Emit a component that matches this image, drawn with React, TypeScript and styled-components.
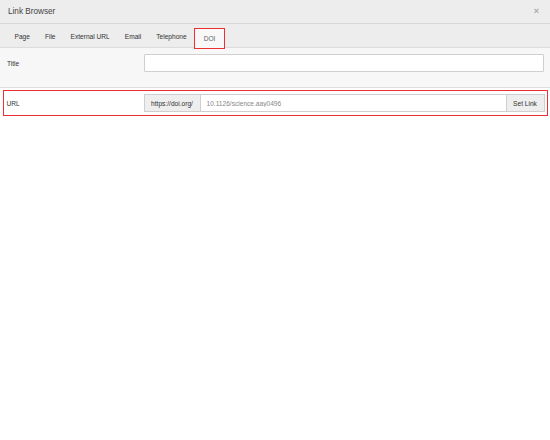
import React from "react";
import styled, { createGlobalStyle } from "styled-components";

const GlobalStyle = createGlobalStyle`
  html, body {
    margin: 0;
    padding: 0;
    background: #ffffff;
    font-family: "Liberation Sans", Arial, sans-serif;
    color: #333;
  }
  * {
    box-sizing: border-box;
  }
`;

const tabs = ["Page", "File", "External URL", "Email", "Telephone", "DOI"];

const App = () => {
  return (
    <>
      <GlobalStyle />
      <Window>
        <Header>
          <HeaderTitle>Link Browser</HeaderTitle>
          <Close>×</Close>
        </Header>
        <TabBar>
          {tabs.map((t) => (
            <Tab key={t} $active={t === "DOI"}>
              {t}
            </Tab>
          ))}
        </TabBar>
        <TitleRow>
          <Label>Title</Label>
          <TextInput type="text" />
        </TitleRow>
        <UrlRow>
          <Label>URL</Label>
          <InputGroup>
            <Addon>https://doi.org/</Addon>
            <GroupInput type="text" placeholder="10.1126/science.aay0496" />
            <SetButton>Set Link</SetButton>
          </InputGroup>
        </UrlRow>
      </Window>
    </>
  );
};

export default App;

const Window = styled.div`
  width: 550px;
  height: 440px;
  background: #fff;
  display: flex;
  flex-direction: column;
`;

const Header = styled.div`
  height: 24px;
  background: #ededed;
  border-bottom: 1px solid #d6d6d6;
  display: flex;
  align-items: center;
  justify-content: space-between;
  padding: 0 11px 0 8px;
`;

const HeaderTitle = styled.span`
  font-size: 8.2px;
  color: #444;
`;

const Close = styled.span`
  font-size: 9px;
  font-weight: 700;
  color: #aaa;
  line-height: 1;
`;

const TabBar = styled.div`
  height: 24px;
  background: #ededed;
  border-bottom: 1px solid #dcdcdc;
  display: flex;
  align-items: flex-end;
  padding-left: 7px;
`;

const Tab = styled.div<{ $active?: boolean }>`
  height: 21px;
  display: flex;
  align-items: center;
  padding: 0 ${(p) => (p.$active ? "8.5px" : "7.5px")};
  font-size: 6.6px;
  color: ${(p) => (p.$active ? "#666" : "#333")};
  background: ${(p) => (p.$active ? "#f8f8f8" : "transparent")};
  border: ${(p) => (p.$active ? "1.5px solid #ec2f2f" : "none")};
  margin-bottom: ${(p) => (p.$active ? "-2px" : "0")};
  position: relative;
`;

const TitleRow = styled.div`
  display: grid;
  grid-template-columns: 137px 1fr;
  align-items: center;
  padding: 6px 6px 15px 7px;
  background: #f7f7f7;
  border-bottom: 1px solid #dedede;
`;

const Label = styled.span`
  font-size: 6.6px;
  color: #333;
`;

const TextInput = styled.input`
  height: 18px;
  width: 100%;
  border: 1px solid #cfcfcf;
  background: #fff;
  border-radius: 1px;
  padding: 0 6px;
  font-size: 6.6px;
  outline: none;
`;

const UrlRow = styled.div`
  margin: 2px 2px 0 3px;
  display: grid;
  grid-template-columns: 137px 1fr;
  align-items: center;
  border: 1.5px solid #ec2f2f;
  padding: 3px 2.5px;
  background: #fff;
`;

const InputGroup = styled.div`
  display: flex;
  height: 18px;
`;

const Addon = styled.span`
  width: 56px;
  display: flex;
  align-items: center;
  justify-content: center;
  background: #eeeeee;
  border: 1px solid #cfcfcf;
  border-right: none;
  font-size: 6.6px;
  color: #333;
`;

const GroupInput = styled.input`
  flex: 1;
  min-width: 0;
  border: 1px solid #cfcfcf;
  background: #fff;
  padding: 0 6px;
  font-size: 6.6px;
  font-family: "Liberation Sans", Arial, sans-serif;
  outline: none;
  &::placeholder {
    color: #888;
  }
`;

const SetButton = styled.button`
  width: 38px;
  background: #eeeeee;
  border: 1px solid #cfcfcf;
  border-left: none;
  font-size: 6.6px;
  font-family: "Liberation Sans", Arial, sans-serif;
  color: #333;
  padding: 0;
`;
